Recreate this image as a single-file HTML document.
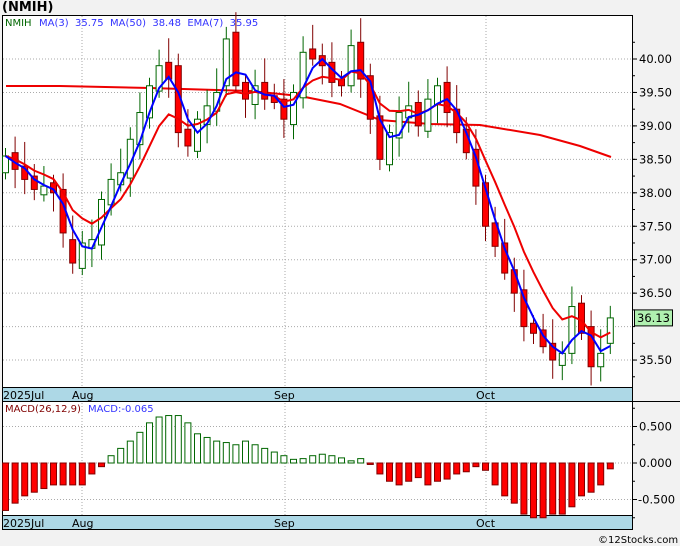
<!DOCTYPE html>
<html><head><style>
body{margin:0;width:680px;height:546px;background:#f2f2f2;font-family:"DejaVu Sans",sans-serif;overflow:hidden;position:relative}
.t{position:absolute;font-size:12px;white-space:nowrap;line-height:15px}
</style></head><body>
<svg id="s" width="680" height="546" style="position:absolute;left:0;top:0" font-family="DejaVu Sans, sans-serif" font-size="12"></svg>
<div class="t" style="left:2px;top:0px;font-size:13px;font-weight:bold">(NMIH)</div>
<script>
const s=document.getElementById('s');let h='';
const X0=5.5,DX=9.6;const xi=i=>X0+i*DX;
const py=p=>59+(40-p)*66.9;
const my=v=>463-v*73;
h+='<rect x="2.5" y="15.5" width="630" height="514" fill="#fff" stroke="#000"/>';
const grid='stroke="#aaa" stroke-dasharray="1,2"';
[40,39.5,39,38.5,38,37.5,37,36.5,36,35.5].forEach(p=>{h+=`<line x1="3" x2="632" y1="${py(p)}" y2="${py(p)}" ${grid}/>`;});
[0.5,0,-0.5].forEach(v=>{h+=`<line x1="3" x2="632" y1="${my(v)}" y2="${my(v)}" ${grid}/>`;});
[82,285,486].forEach(x=>{h+=`<line x1="${x}" x2="${x}" y1="16" y2="529" ${grid}/>`;});
h+='<rect x="2.5" y="387.5" width="630" height="14" fill="#add8e6" stroke="#000"/>';
h+='<rect x="2.5" y="515.5" width="630" height="14" fill="#add8e6" stroke="#000"/>';
h+='<line x1="632.5" y1="15" x2="632.5" y2="530" stroke="#000"/><line x1="632" y1="401.5" x2="680" y2="401.5" stroke="#000"/>';
[[3,'2025Jul'],[72,'Aug'],[274,'Sep'],[476,'Oct']].forEach(([x,t])=>{h+=`<text x="${x}" y="399" font-size="11">${t}</text><text x="${x}" y="527" font-size="11">${t}</text>`;});
[40,39.5,39,38.5,38,37.5,37,36.5,35.5].forEach(p=>{h+=`<line x1="632" x2="637" y1="${py(p)}" y2="${py(p)}" stroke="#000"/><text x="639" y="${py(p)+4}" font-size="11.5">${p.toFixed(2)}</text>`;});
for(let p=35.25;p<40.5;p+=0.25){h+=`<line x1="632" x2="635" y1="${py(p)}" y2="${py(p)}" stroke="#000"/>`}
[[0.5,'0.500'],[0,'0.000'],[-0.5,'-0.500']].forEach(([v,t])=>{h+=`<line x1="632" x2="637" y1="${my(v)}" y2="${my(v)}" stroke="#000"/><text x="${v<0?638:639}" y="${my(v)+4}" font-size="11.5">${t}</text>`;});
for(let v=-0.75;v<0.8;v+=0.25){h+=`<line x1="632" x2="635" y1="${my(v)}" y2="${my(v)}" stroke="#000"/>`}
const C=[38.55,38.35,38.2,38.05,38.1,38.0,37.4,36.95,37.25,37.3,37.9,38.2,38.3,38.8,39.2,39.6,39.9,39.7,38.9,38.7,39.1,39.3,39.5,40.3,39.6,39.4,39.6,39.4,39.35,39.1,39.5,40.1,40.0,39.9,39.65,39.6,40.2,39.7,39.1,38.5,38.9,39.2,39.3,39.0,39.4,39.6,39.2,38.9,38.6,38.1,37.5,37.2,36.8,36.5,36.0,35.9,35.7,35.5,35.6,36.3,35.9,35.4,35.6,36.13];
const O=C.map((c,i)=>i==0?38.3:(C[i-1]+(c>C[i-1]?-0.08:0.05)));
O[7]=37.3;O[23]=39.6;O[24]=40.4;O[18]=39.9;O[36]=39.6;O[59]=35.6;O[61]=36.0;O[62]=35.4;O[63]=35.75;
const ma50=[[6,86],[60,86],[150,88],[250,91],[300,96],[340,104],[380,120],[430,124],[480,125],[540,135],[580,146],[611,157]];
h+=`<polyline fill="none" stroke="#e00" stroke-width="2" points="${ma50.map(p=>p.join(',')).join(' ')}"/>`;
C.forEach((c,i)=>{const o=O[i],x=xi(i),up=c>=o;const hi=Math.max(o,c)+0.12+((i*7)%5)*0.06,lo=Math.min(o,c)-0.1-((i*3)%4)*0.06;
const col=up?'#060':'#800000';h+=`<line x1="${x}" x2="${x}" y1="${py(hi)}" y2="${py(lo)}" stroke="${col}"/>`;
const y1=py(Math.max(o,c)),y2=py(Math.min(o,c));h+=`<rect x="${x-3}" y="${y1}" width="6" height="${Math.max(1,y2-y1)}" fill="${up?'#fff':'#f00'}" stroke="${col}"/>`;});
let m3=[],e7=[],e=C[0];C.forEach((c,i)=>{e=i==0?c:e+(c-e)*0.25;e7.push(`${xi(i)},${py(e)}`);const a=C.slice(Math.max(0,i-2),i+1);m3.push(`${xi(i)},${py(a.reduce((p,q)=>p+q,0)/a.length)}`)});
h+=`<polyline fill="none" stroke="#e00" stroke-width="2" points="${e7.join(' ')}"/>`;
h+=`<polyline fill="none" stroke="#00f" stroke-width="2" points="${m3.join(' ')}"/>`;
const M=[-0.65,-0.55,-0.45,-0.4,-0.35,-0.3,-0.3,-0.3,-0.3,-0.15,-0.05,0.1,0.2,0.3,0.42,0.55,0.63,0.65,0.65,0.55,0.4,0.35,0.3,0.28,0.25,0.3,0.25,0.2,0.15,0.1,0.05,0.06,0.1,0.12,0.1,0.07,0.03,0.06,-0.02,-0.15,-0.25,-0.3,-0.25,-0.2,-0.3,-0.25,-0.22,-0.15,-0.12,-0.05,-0.1,-0.3,-0.45,-0.55,-0.7,-0.75,-0.75,-0.7,-0.7,-0.6,-0.45,-0.4,-0.3,-0.08];
M.forEach((v,i)=>{const x=xi(i);const y=v>=0?my(v):my(0),hh=Math.abs(my(v)-my(0));
h+=`<rect x="${x-3}" y="${y}" width="6" height="${Math.max(1,hh)}" fill="${v>=0?'#fff':'#f00'}" stroke="${v>=0?'#060':'#800000'}"/>`;});
h+='<text x="5" y="26" fill="#060" font-size="10" xml:space="preserve">NMIH</text><text x="39" y="26" fill="#33f" font-size="10" xml:space="preserve">MA(3)  35.75  MA(50)  38.48  EMA(7)  35.95</text>';
h+='<text x="5" y="412" fill="#800000" font-size="10">MACD(26,12,9)</text><text x="88" y="412" fill="#33f" font-size="10">MACD:-0.065</text>';
h+=`<rect x="634.5" y="${py(36.13)-8}" width="38" height="16" fill="#b0f0b0" stroke="#000"/><text x="637" y="${py(36.13)+4}" font-size="11.5">36.13</text>`;
h+='<text x="598" y="543" font-size="10">©12Stocks.com</text>';
s.innerHTML=h;
</script>
</body></html>
